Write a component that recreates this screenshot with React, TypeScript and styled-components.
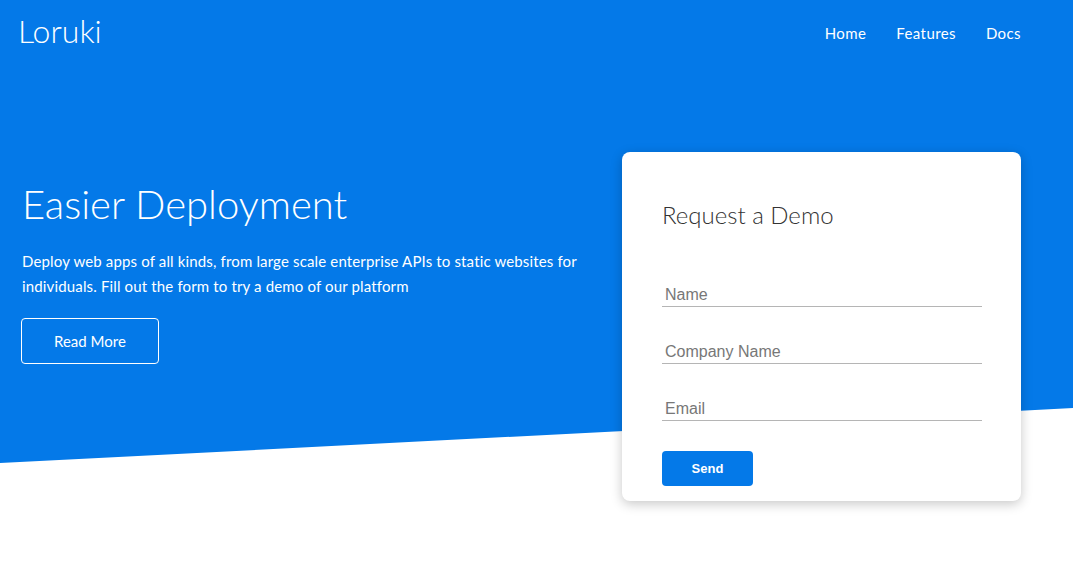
import React from "react";
import styled, { createGlobalStyle } from "styled-components";

const Global = createGlobalStyle`
  html, body { margin: 0; padding: 0; background: #ffffff; }
  body { font-family: Lato, "Open Sans", sans-serif; color: #ffffff; }
  * { box-sizing: border-box; }
`;

const Page = styled.div`
  position: relative;
  min-height: 564px;
  overflow: hidden;
  &::before {
    content: "";
    position: absolute;
    left: 0;
    top: 0;
    width: 100%;
    height: 463px;
    background: #0479e8;
    clip-path: polygon(0 0, 100% 0, 100% 408px, 0 463px);
    z-index: 0;
  }
`;

const Navbar = styled.header`
  position: relative;
  z-index: 1;
  height: 66px;
  display: flex;
  align-items: center;
  justify-content: space-between;
  padding: 0 52px 0 18px;
`;

const Logo = styled.div`
  font-family: Lato, sans-serif;
  font-weight: 300;
  font-size: 32px;
  line-height: 30px;
  margin-bottom: 4px;
`;

const NavList = styled.nav`
  display: flex;
  gap: 30px;
`;

const NavLink = styled.a`
  font-size: 15px;
  line-height: 18px;
  letter-spacing: 0.4px;
  color: #ffffff;
  text-decoration: none;
`;

const Main = styled.main`
  position: relative;
  z-index: 1;
  display: grid;
  grid-template-columns: 1fr 399px;
  align-items: start;
  padding: 86px 52px 0 22px;
`;

const Intro = styled.section`
  display: flex;
  flex-direction: column;
  align-items: flex-start;
  padding-top: 28px;
`;

const Heading = styled.h1`
  margin: 0;
  font-weight: 300;
  font-size: 40px;
  line-height: 48px;
`;

const Lead = styled.p`
  margin: 21px 0 0;
  max-width: 575px;
  font-size: 15px;
  line-height: 25px;
  letter-spacing: 0.15px;
  font-weight: 400;
`;

const OutlineButton = styled.a`
  margin-top: 19px;
  margin-left: -1px;
  display: inline-block;
  padding: 12px 32px;
  border: 1px solid #ffffff;
  border-radius: 4px;
  font-size: 15px;
  line-height: 20px;
  color: #ffffff;
  text-decoration: none;
`;

const Card = styled.form`
  background: #ffffff;
  border-radius: 8px;
  box-shadow: 0 3px 12px rgba(0, 0, 0, 0.22);
  padding: 48px 39px 15px 40px;
  display: flex;
  flex-direction: column;
  align-items: flex-start;
`;

const CardTitle = styled.h2`
  margin: 0 0 47px 0;
  font-weight: 300;
  font-size: 24px;
  line-height: 30px;
  color: #333333;
`;

const Field = styled.input`
  width: 100%;
  height: 30px;
  margin-bottom: 27px;
  padding: 9px 3px 2px;
  border: none;
  border-bottom: 1px solid #b5b5b5;
  outline: none;
  font-family: "Liberation Sans", Arial, sans-serif;
  font-size: 16px;
  line-height: 18px;
  color: #333;
  background: transparent;
  &::placeholder { color: #777777; }
  &:last-of-type { margin-bottom: 30px; }
`;

const SendButton = styled.button`
  width: 91px;
  height: 35px;
  border: none;
  border-radius: 4px;
  background: #0479e8;
  color: #ffffff;
  font-family: "Liberation Sans", Arial, sans-serif;
  font-weight: 700;
  font-size: 13px;
  cursor: pointer;
`;

export default function App() {
  return (
    <>
      <Global />
      <Page>
        <Navbar>
          <Logo>Loruki</Logo>
          <NavList>
            <NavLink href="#">Home</NavLink>
            <NavLink href="#">Features</NavLink>
            <NavLink href="#">Docs</NavLink>
          </NavList>
        </Navbar>
        <Main>
          <Intro>
            <Heading>Easier Deployment</Heading>
            <Lead>
              Deploy web apps of all kinds, from large scale enterprise APIs to static websites for
              individuals. Fill out the form to try a demo of our platform
            </Lead>
            <OutlineButton href="#">Read More</OutlineButton>
          </Intro>
          <Card onSubmit={(e) => e.preventDefault()}>
            <CardTitle>Request a Demo</CardTitle>
            <Field type="text" placeholder="Name" />
            <Field type="text" placeholder="Company Name" />
            <Field type="email" placeholder="Email" />
            <SendButton type="submit">Send</SendButton>
          </Card>
        </Main>
      </Page>
    </>
  );
}
